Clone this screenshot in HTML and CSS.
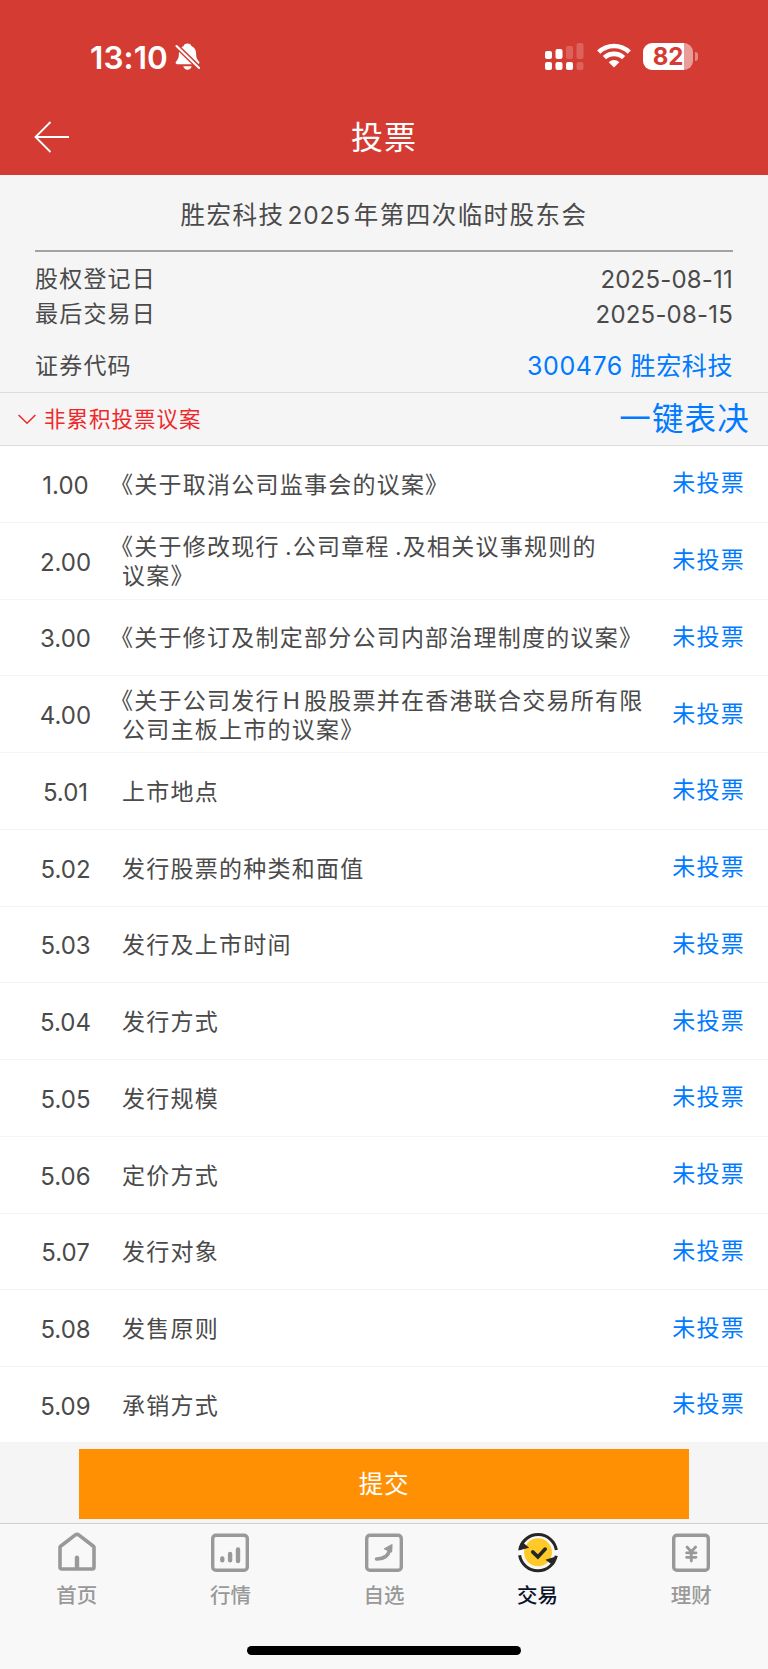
FILE: index.html
```html
<!DOCTYPE html>
<html lang="zh-CN">

<head>
  <meta charset="utf-8">
  <meta name="viewport" content="width=device-width, initial-scale=1">
  <title>投票</title>
  <link rel="stylesheet" href="styles.css">
</head>

<body>

  <header class="header">
    <div class="status-bar">
      <div class="status-left">
        <span class="clock">13:10</span>
        <svg class="bell" width="26" height="28" viewBox="0 0 26 28">
          <path fill="#fff" d="M8.6 2.9C9.3 1.4 10.6.6 12.5.6s3.2.8 3.9 2.3c3.2 1.4 4.6 4 4.7 7.4.1 4.600.8 5.900 2.900 8.200.9 1 .4 2.700-1.200 2.700H2.200C.7 21.200.1 19.500 1.100 18.500c2.100-2.300 2.700-3.600 2.800-8.200.1-3.400 1.500-6 4.700-7.400z"/>
          <path fill="#fff" d="M8.300 23.300h8.400c-.5 2.200-2 3.500-4.200 3.500s-3.700-1.300-4.200-3.500z"/>
          <path stroke="#d43b33" stroke-width="5" d="M0 1.500l26 25.200"/>
          <path stroke="#fff" stroke-width="2.100" stroke-linecap="round" d="M1.500 3l22.600 22"/>
        </svg>
      </div>
      <div class="status-right">
        <svg width="39" height="27" viewBox="0 0 39 27" fill="#fff">
          <rect x="0" y="8" width="7" height="8" rx="2"/>
          <rect x="10.500" y="6" width="7" height="10" rx="2"/>
          <rect x="21" y="3" width="7" height="13" rx="2" opacity=".2"/>
          <rect x="31.500" y="0" width="7" height="16" rx="2" opacity=".2"/>
          <rect x="0" y="19" width="7" height="8" rx="2"/>
          <rect x="10.500" y="19" width="7" height="8" rx="2"/>
          <rect x="21" y="19" width="7" height="8" rx="2"/>
          <rect x="31.500" y="19" width="7" height="8" rx="2" opacity=".2"/>
        </svg>
        <svg class="wifi" width="34" height="25" viewBox="0 0 34 25">
          <g fill="none" stroke="#fff" stroke-width="4.600">
            <path d="M1.700 9.200a22 22 0 0 1 30.600 0"/>
            <path d="M7.400 14.700a14 14 0 0 1 19.200 0"/>
          </g>
          <path fill="#fff" d="M11.700 19.200a7.800 7.800 0 0 1 10.600 0L17 24.500z"/>
        </svg>
        <div class="battery">
          <div class="battery-body">82</div>
          <div class="battery-cap"></div>
        </div>
      </div>
    </div>
    <div class="nav">
      <svg class="back" width="36" height="32" viewBox="0 0 36 32" fill="none" stroke="#fff" stroke-width="1.800">
        <path d="M35 16H1.500M16.500 1L1.500 16l15 15"/>
      </svg>
      <h1>投票</h1>
    </div>
  </header>

  <section class="info">
    <h2>胜宏科技<span class="latin year">2025</span>年第四次临时股东会</h2>
    <div class="info-row"><span>股权登记日</span><span class="date">2025-08-11</span></div>
    <div class="info-row"><span>最后交易日</span><span class="date">2025-08-15</span></div>
    <div class="info-row code-row"><span>证券代码</span><a class="code">300476 胜宏科技</a></div>
  </section>

  <div class="group">
    <svg width="18" height="11" viewBox="0 0 18 11" fill="none" stroke="#f0282c" stroke-width="1.600">
      <path d="M.6 1L9 9.200 17.400 1"/>
    </svg>
    <span class="group-name">非累积投票议案</span>
    <a class="vote-all">一键表决</a>
  </div>

  <ul class="list">
    <li><span class="no">1.00</span><span class="name quoted">《关于取消公司监事会的议案》</span><a>未投票</a></li>
    <li><span class="no">2.00</span><span class="name quoted">《关于修改现行 .公司章程 .及相关议事规则的<br>议案》</span><a>未投票</a></li>
    <li><span class="no">3.00</span><span class="name quoted">《关于修订及制定部分公司内部治理制度的议案》</span><a>未投票</a></li>
    <li><span class="no">4.00</span><span class="name quoted">《关于公司发行<span class="latin">H</span>股股票并在香港联合交易所有限<br>公司主板上市的议案》</span><a>未投票</a></li>
    <li><span class="no">5.01</span><span class="name">上市地点</span><a>未投票</a></li>
    <li><span class="no">5.02</span><span class="name">发行股票的种类和面值</span><a>未投票</a></li>
    <li><span class="no">5.03</span><span class="name">发行及上市时间</span><a>未投票</a></li>
    <li><span class="no">5.04</span><span class="name">发行方式</span><a>未投票</a></li>
    <li><span class="no">5.05</span><span class="name">发行规模</span><a>未投票</a></li>
    <li><span class="no">5.06</span><span class="name">定价方式</span><a>未投票</a></li>
    <li><span class="no">5.07</span><span class="name">发行对象</span><a>未投票</a></li>
    <li><span class="no">5.08</span><span class="name">发售原则</span><a>未投票</a></li>
    <li><span class="no">5.09</span><span class="name">承销方式</span><a>未投票</a></li>
  </ul>

  <div class="submit-bar">
    <button type="button">提交</button>
  </div>

  <nav class="tabs">
    <a class="tab">
      <svg width="42" height="42" viewBox="0 0 42 42" fill="none" stroke="#999" stroke-width="3.600" stroke-linecap="round" stroke-linejoin="round">
        <path d="M4.300 15.500L19 4.100q2-1.500 4 0l14.700 11.400q.3.300.3.800v19.900q0 1.800-1.800 1.800H5.800Q4 38 4 36.200V16.300q0-.5.300-.8z"/>
        <path stroke-width="4.400" d="M21 37V26.800"/>
      </svg>
      <span>首页</span>
    </a>
    <a class="tab">
      <svg width="42" height="42" viewBox="0 0 42 42" fill="none" stroke="#999" stroke-width="3.400" stroke-linecap="round">
        <rect x="3.700" y="4.200" width="34.600" height="35" rx="3.200"/>
        <path stroke-width="4.400" d="M13.300 27.500v1.800M21.100 23v6.300M29 18.500v11.500"/>
      </svg>
      <span>行情</span>
    </a>
    <a class="tab">
      <svg width="42" height="42" viewBox="0 0 42 42" fill="none" stroke="#999" stroke-width="3.400" stroke-linecap="round" stroke-linejoin="round">
        <rect x="3.700" y="4.200" width="34.600" height="35" rx="3.200"/>
        <path stroke-width="3.600" d="M13.500 28c6.500.2 11.500-2 13.300-9.500"/>
        <path fill="#999" stroke-width="1.400" d="M21.600 17.800l7.300-4-.4 7z"/>
      </svg>
      <span>自选</span>
    </a>
    <a class="tab active">
      <svg width="42" height="42" viewBox="0 0 42 42" fill="none">
        <circle cx="21" cy="21.300" r="14" fill="#ffca28"/>
        <path stroke="#262626" stroke-width="3" d="M2.800 18.600a18.600 18.600 0 0 1 36.600.5M39.200 24.800a18.600 18.600 0 0 1-36.600-.5"/>
        <path fill="#262626" d="M1.200 19.600l3.400-9 7.600 6.100zM40.600 25l-12.200 3.800 7.600 5.400z"/>
        <path stroke="#262626" stroke-width="3.600" stroke-linecap="round" d="M15.700 20.900l5.200 5 7.300-7.800"/>
      </svg>
      <span>交易</span>
    </a>
    <a class="tab">
      <svg width="42" height="42" viewBox="0 0 42 42" fill="none" stroke="#999" stroke-width="3.400" stroke-linecap="round">
        <rect x="3.700" y="4.200" width="34.600" height="35" rx="3.200"/>
        <path stroke-width="2.800" d="M17 16l4.300 4.700 4.300-4.700M16.600 21.800h9.400M16.600 26.300h9.400M21.300 21v9"/>
      </svg>
      <span>理财</span>
    </a>
  </nav>

  <div class="home-indicator"></div>

</body>

</html>
```

FILE: styles.css
```css
* {
  box-sizing: border-box;
}

body {
  margin: 0;
  width: 768px;
  height: 1669px;
  display: flex;
  flex-direction: column;
  overflow: hidden;
  background-color: #f8f8f8;
  color: #4a4a4a;
  font-family: Inter, "Noto Sans CJK SC", sans-serif;
  font-size: 23px;
  white-space: nowrap;
}

h1, h2, ul {
  margin: 0;
  padding: 0;
  font-weight: 400;
}

svg {
  display: block;
  flex: none;
}

a {
  color: #007aff;
}

/* status bar and title */
.header {
  height: 175px;
  flex: none;
  background-color: #d43b33;
  color: #fff;
}

.status-bar {
  display: flex;
  justify-content: space-between;
  height: 99px;
  padding: 43px 70px 0 90px;
}

.status-left, .status-right {
  display: flex;
  align-items: flex-start;
}

.clock {
  width: 85px;
  font-size: 31.5px;
  font-weight: 600;
  line-height: 29px;
  letter-spacing: 0.1px;
}

.wifi {
  margin-left: 13px;
}

.battery {
  display: flex;
  align-items: center;
  margin-left: 12px;
}

.battery-body {
  width: 50px;
  height: 27px;
  border-radius: 9px;
  background: linear-gradient(to right, #fff 41px, #e99d99 41px);
  color: #d43b33;
  font-size: 24px;
  font-weight: 700;
  line-height: 28px;
  text-align: center;
}

.battery-cap {
  width: 3px;
  height: 9px;
  margin-left: 2px;
  border-radius: 0 4px 4px 0;
  background-color: #e38a85;
}

.nav {
  display: grid;
  grid-template-columns: 1fr auto 1fr;
  align-items: center;
  height: 76px;
  padding: 0 34px;
}

.nav h1 {
  padding-top: 2px;
  font-size: 32px;
  line-height: 40px;
  letter-spacing: 1px;
}

/* meeting info */
.info {
  height: 217px;
  flex: none;
  padding: 0 35px;
  background-color: #f5f5f5;
}

.info h2 {
  height: 77px;
  margin-bottom: 10px;
  border-bottom: 2px solid #a3a3a3;
  font-size: 24.5px;
  line-height: 81px;
  letter-spacing: 1.45px;
  text-align: center;
}

.latin {
  padding: 0 3px;
}

.year {
  letter-spacing: 0.8px;
}

.info-row {
  display: flex;
  justify-content: space-between;
  height: 35px;
  line-height: 35px;
  letter-spacing: 1.2px;
}

.date {
  font-size: 24px;
  letter-spacing: 0.2px;
}

.code-row {
  margin-top: 16px;
  line-height: 36px;
}

.code {
  font-size: 25px;
  letter-spacing: 0.6px;
}

/* proposal group */
.group {
  display: flex;
  align-items: center;
  height: 54px;
  flex: none;
  padding: 0 18px;
  border-top: 1px solid #dcdcdc;
  border-bottom: 1px solid #dcdcdc;
  background-color: #f5f5f5;
}

.group-name {
  margin-left: 8px;
  padding-bottom: 3px;
  color: #f0282c;
  font-size: 21.5px;
  letter-spacing: 1px;
}

.vote-all {
  margin-left: auto;
  font-size: 31.5px;
  line-height: 50px;
  letter-spacing: 1.2px;
}

.list {
  height: 996px;
  flex: none;
  overflow: hidden;
  background-color: #fff;
  list-style: none;
}

.list li {
  display: grid;
  grid-template-columns: 131px 1fr auto;
  align-items: center;
  height: 76.75px;
  padding: 3px 23px 0 0;
  border-bottom: 1px solid #f4f4f4;
  letter-spacing: 1.24px;
}

.no {
  font-size: 24px;
  letter-spacing: 0;
  text-align: center;
}

.name {
  margin-left: -9px;
  line-height: 29px;
  text-spacing-trim: space-all;
  word-spacing: -2.5px;
}

/* opening bracket hangs by its empty half */
.quoted {
  text-indent: -12px;
}

.list a {
  line-height: 30px;
  padding-bottom: 4px;
}

.submit-bar {
  height: 81px;
  flex: none;
  padding: 7px 79px 0;
  background-color: #f5f5f5;
}

.submit-bar button {
  display: block;
  width: 100%;
  height: 70px;
  padding: 0 0 3px;
  border: none;
  background-color: #ff9003;
  color: #fff;
  font-family: inherit;
  font-size: 24.5px;
  letter-spacing: 0.8px;
}

/* bottom tabs */
.tabs {
  display: grid;
  grid-template-columns: repeat(5, 1fr);
  height: 123px;
  flex: none;
  padding-top: 7px;
  border-top: 1px solid #cfcfcf;
}

.tab {
  display: flex;
  flex-direction: column;
  align-items: center;
  color: #999;
  font-size: 20.5px;
  font-weight: 500;
}

.tab span {
  margin-top: 8px;
  line-height: 30px;
}

.tab.active {
  color: #0b1428;
}

.home-indicator {
  width: 274px;
  height: 9px;
  flex: none;
  margin: 0 auto;
  border-radius: 5px;
  background-color: #000;
}
```
